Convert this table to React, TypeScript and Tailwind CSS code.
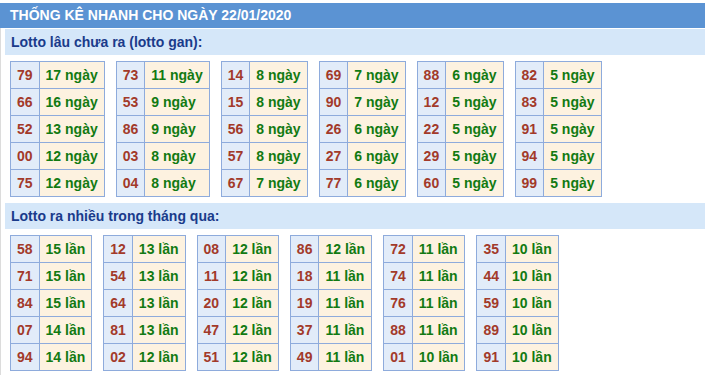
const GAN: [string, number][][] = [
  [['79', 17], ['66', 16], ['52', 13], ['00', 12], ['75', 12]],
  [['73', 11], ['53', 9], ['86', 9], ['03', 8], ['04', 8]],
  [['14', 8], ['15', 8], ['56', 8], ['57', 8], ['67', 7]],
  [['69', 7], ['90', 7], ['26', 6], ['27', 6], ['77', 6]],
  [['88', 6], ['12', 5], ['22', 5], ['29', 5], ['60', 5]],
  [['82', 5], ['83', 5], ['91', 5], ['94', 5], ['99', 5]],
];

const NHIEU: [string, number][][] = [
  [['58', 15], ['71', 15], ['84', 15], ['07', 14], ['94', 14]],
  [['12', 13], ['54', 13], ['64', 13], ['81', 13], ['02', 12]],
  [['08', 12], ['11', 12], ['20', 12], ['47', 12], ['51', 12]],
  [['86', 12], ['18', 11], ['19', 11], ['37', 11], ['49', 11]],
  [['72', 11], ['74', 11], ['76', 11], ['88', 11], ['01', 10]],
  [['35', 10], ['44', 10], ['59', 10], ['89', 10], ['91', 10]],
];

function Box({ rows, unit }: { rows: [string, number][]; unit: string }) {
  return (
    <table className="border-collapse border border-[#8eabdc]">
      <tbody>
        {rows.map(([num, count], i) => (
          <tr key={i}>
            <td className="border border-[#8eabdc] bg-[#e2ecf9] px-[6px] py-[5px] leading-[16px] text-center text-[#a23a2a]">
              {num}
            </td>
            <td className="border border-[#8eabdc] bg-[#fdf2e0] px-[6px] py-[5px] leading-[16px] text-left text-[#127a12] whitespace-nowrap">
              {count} {unit}
            </td>
          </tr>
        ))}
      </tbody>
    </table>
  );
}

function Section({ title, data, unit }: { title: string; data: [string, number][][]; unit: string }) {
  return (
    <div>
      <div className="ml-[4px] h-[26px] bg-[#d5e7f9] pl-[6px] leading-[26px] text-[#1a3b8b]">{title}</div>
      <div className="flex gap-[11px] pl-[9px] pt-[6px] pb-[6px]">
        {data.map((rows, i) => (
          <Box key={i} rows={rows} unit={unit} />
        ))}
      </div>
    </div>
  );
}

export default function App() {
  return (
    <div className="w-[711px] h-[375px] bg-white pt-[3px] font-['Liberation_Sans',Arial,sans-serif] text-[14px] font-bold">
      <div className="w-[705px]">
        <div className="h-[25px] bg-[#5b93d3] pl-[10px] leading-[25px] text-white">
          THỐNG KÊ NHANH CHO NGÀY 22/01/2020
        </div>
        <div className="border-l border-b border-[#dcdcdc] pt-[1px]">
          <Section title="Lotto lâu chưa ra (lotto gan):" data={GAN} unit="ngày" />
          <Section title="Lotto ra nhiều trong tháng qua:" data={NHIEU} unit="lần" />
        </div>
      </div>
    </div>
  );
}
